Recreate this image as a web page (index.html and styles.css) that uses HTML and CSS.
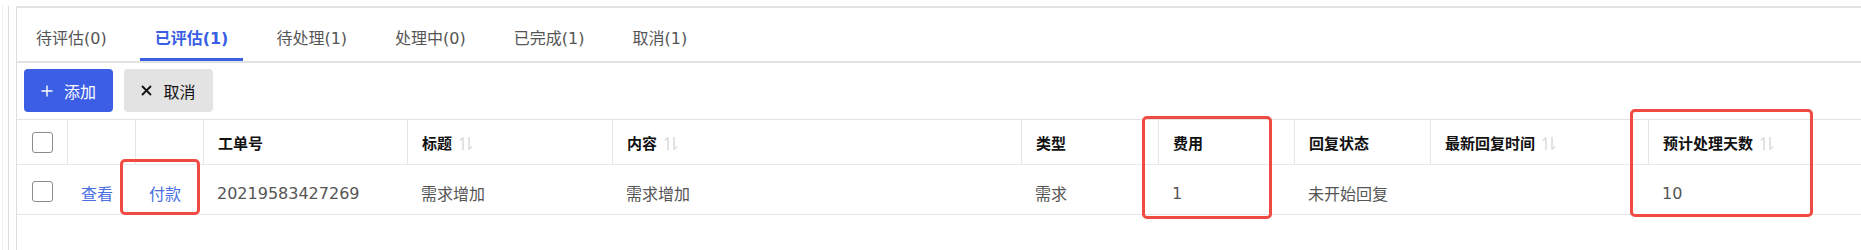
FILE: index.html
```html
<!DOCTYPE html>
<html lang="zh-CN">

<head>
    <meta charset="UTF-8">
    <meta name="viewport" content="width=device-width, initial-scale=1.0">
    <title>工单列表</title>
    <link rel="stylesheet" href="styles.css">
</head>

<body>
    <div class="shell">
        <div class="shell-inner">
            <div class="panel">

                <!-- status tabs -->
                <div class="tabs">
                    <div class="tab">待评估(0)</div>
                    <div class="tab active">已评估(1)</div>
                    <div class="tab">待处理(1)</div>
                    <div class="tab">处理中(0)</div>
                    <div class="tab">已完成(1)</div>
                    <div class="tab">取消(1)</div>
                </div>

                <!-- toolbar -->
                <div class="toolbar">
                    <button class="btn btn-primary">
                        <svg width="12" height="12" viewBox="0 0 12 12"><path d="M6 0.5V11.5M0.5 6H11.5" stroke="#fff" stroke-width="1.4" fill="none"/></svg>
                        <span>添加</span>
                    </button>
                    <button class="btn btn-default">
                        <svg width="11" height="11" viewBox="0 0 11 11"><path d="M1 1L10 10M10 1L1 10" stroke="#111" stroke-width="1.8" fill="none"/></svg>
                        <span>取消</span>
                    </button>
                </div>

                <!-- list -->
                <table class="grid">
                    <colgroup>
                        <col style="width:50px">
                        <col style="width:68px">
                        <col style="width:68px">
                        <col style="width:204px">
                        <col style="width:205px">
                        <col style="width:409px">
                        <col style="width:137px">
                        <col style="width:136px">
                        <col style="width:136px">
                        <col style="width:218px">
                        <col>
                    </colgroup>
                    <thead>
                        <tr>
                            <th class="check-cell"><span class="checkbox"></span></th>
                            <th></th>
                            <th></th>
                            <th>工单号</th>
                            <th>标题<svg class="sort" width="14" height="15" viewBox="0 0 14 15"><path d="M4 14V1.5M1 4.5L4 1.5M10 1V13.5M13 10.5L10 13.5" stroke="#dcdcdc" stroke-width="1.6" fill="none"/></svg></th>
                            <th>内容<svg class="sort" width="14" height="15" viewBox="0 0 14 15"><path d="M4 14V1.5M1 4.5L4 1.5M10 1V13.5M13 10.5L10 13.5" stroke="#dcdcdc" stroke-width="1.6" fill="none"/></svg></th>
                            <th>类型</th>
                            <th>费用</th>
                            <th>回复状态</th>
                            <th>最新回复时间<svg class="sort" width="14" height="15" viewBox="0 0 14 15"><path d="M4 14V1.5M1 4.5L4 1.5M10 1V13.5M13 10.5L10 13.5" stroke="#dcdcdc" stroke-width="1.6" fill="none"/></svg></th>
                            <th>预计处理天数<svg class="sort" width="14" height="15" viewBox="0 0 14 15"><path d="M4 14V1.5M1 4.5L4 1.5M10 1V13.5M13 10.5L10 13.5" stroke="#dcdcdc" stroke-width="1.6" fill="none"/></svg></th>
                        </tr>
                    </thead>
                    <tbody>
                        <tr>
                            <td class="check-cell"><span class="checkbox"></span></td>
                            <td><a class="link">查看</a></td>
                            <td><a class="link">付款</a></td>
                            <td>20219583427269</td>
                            <td>需求增加</td>
                            <td>需求增加</td>
                            <td>需求</td>
                            <td>1</td>
                            <td>未开始回复</td>
                            <td></td>
                            <td>10</td>
                        </tr>
                    </tbody>
                </table>

            </div>
        </div>
    </div>

    <!-- red review marks drawn over the page -->
    <div class="mark mark-pay"></div>
    <div class="mark mark-fee"></div>
    <div class="mark mark-days"></div>
</body>

</html>
```

FILE: styles.css
```css
* {
    padding: 0;
    margin: 0;
    box-sizing: border-box;
}

html,
body {
    height: 100%;
}

body {
    background-color: #fff;
    font-family: "DejaVu Sans", "Noto Sans CJK SC", sans-serif;
    font-size: 16px;
    color: #555;
    overflow: hidden;
}

.shell {
    height: 100%;
    margin-left: 2px;
    padding-left: 5px;
    border-left: 1px solid #efefef;
}

.shell-inner {
    height: 100%;
    padding-left: 7px;
    border-left: 1px solid #dedede;
}

.panel {
    height: calc(100% - 6px);
    margin-top: 6px;
    border-top: 2px solid #e2e2e2;
    border-left: 1px solid #dedede;
}

.tabs {
    display: flex;
    gap: 18px;
    height: 55px;
    padding-left: 4px;
    border-bottom: 2px solid #e2e2e2;
}

.tab {
    display: flex;
    align-items: center;
    height: 53px;
    padding: 8px 15px 0;
    border-bottom: 3px solid transparent;
    color: #555;
    white-space: nowrap;
}

.tab.active {
    color: #3a5fe2;
    font-weight: bold;
    border-bottom-color: #3a5fe2;
}

.toolbar {
    display: flex;
    gap: 11px;
    padding: 6px 7px 7px;
}

.btn {
    display: flex;
    align-items: center;
    justify-content: center;
    gap: 11px;
    width: 89px;
    height: 43px;
    border: none;
    border-radius: 4px;
    font-family: inherit;
    font-size: 16px;
}

.btn-primary {
    background-color: #3c5ee5;
    color: #fff;
}

.btn-default {
    background-color: #e3e3e3;
    color: #111;
}

.grid {
    width: 100%;
    table-layout: fixed;
    border-spacing: 0;
}

.grid th {
    height: 46px;
    padding: 0 14px;
    border-top: 1px solid #e2e2e2;
    border-bottom: 1px solid #e4eaf1;
    border-left: 1px solid #e6e6e6;
    text-align: left;
    font-size: 15px;
    font-weight: bold;
    color: #111;
    white-space: nowrap;
}

.grid th:first-child {
    border-left: none;
}

.grid td {
    height: 50px;
    padding: 7px 14px 0;
    border-bottom: 1px solid #e4e4e4;
    color: #555;
    white-space: nowrap;
}

.grid .check-cell {
    padding: 0;
    text-align: center;
}

.grid td.check-cell {
    padding-top: 4px;
}

.checkbox {
    display: inline-block;
    width: 21px;
    height: 21px;
    border: 1.3px solid #8c8c8c;
    border-radius: 3px;
    vertical-align: middle;
    background-color: #fff;
}

.sort {
    margin-left: 7px;
    vertical-align: -2px;
}

.link {
    color: #4a6fe3;
    cursor: pointer;
}

.mark {
    position: absolute;
    border: 3px solid #f04b43;
    border-radius: 5px;
}

.mark-pay {
    left: 120px;
    top: 159px;
    width: 80px;
    height: 56px;
}

.mark-fee {
    left: 1142px;
    top: 116px;
    width: 130px;
    height: 103px;
}

.mark-days {
    left: 1630px;
    top: 109px;
    width: 183px;
    height: 108px;
}
```
